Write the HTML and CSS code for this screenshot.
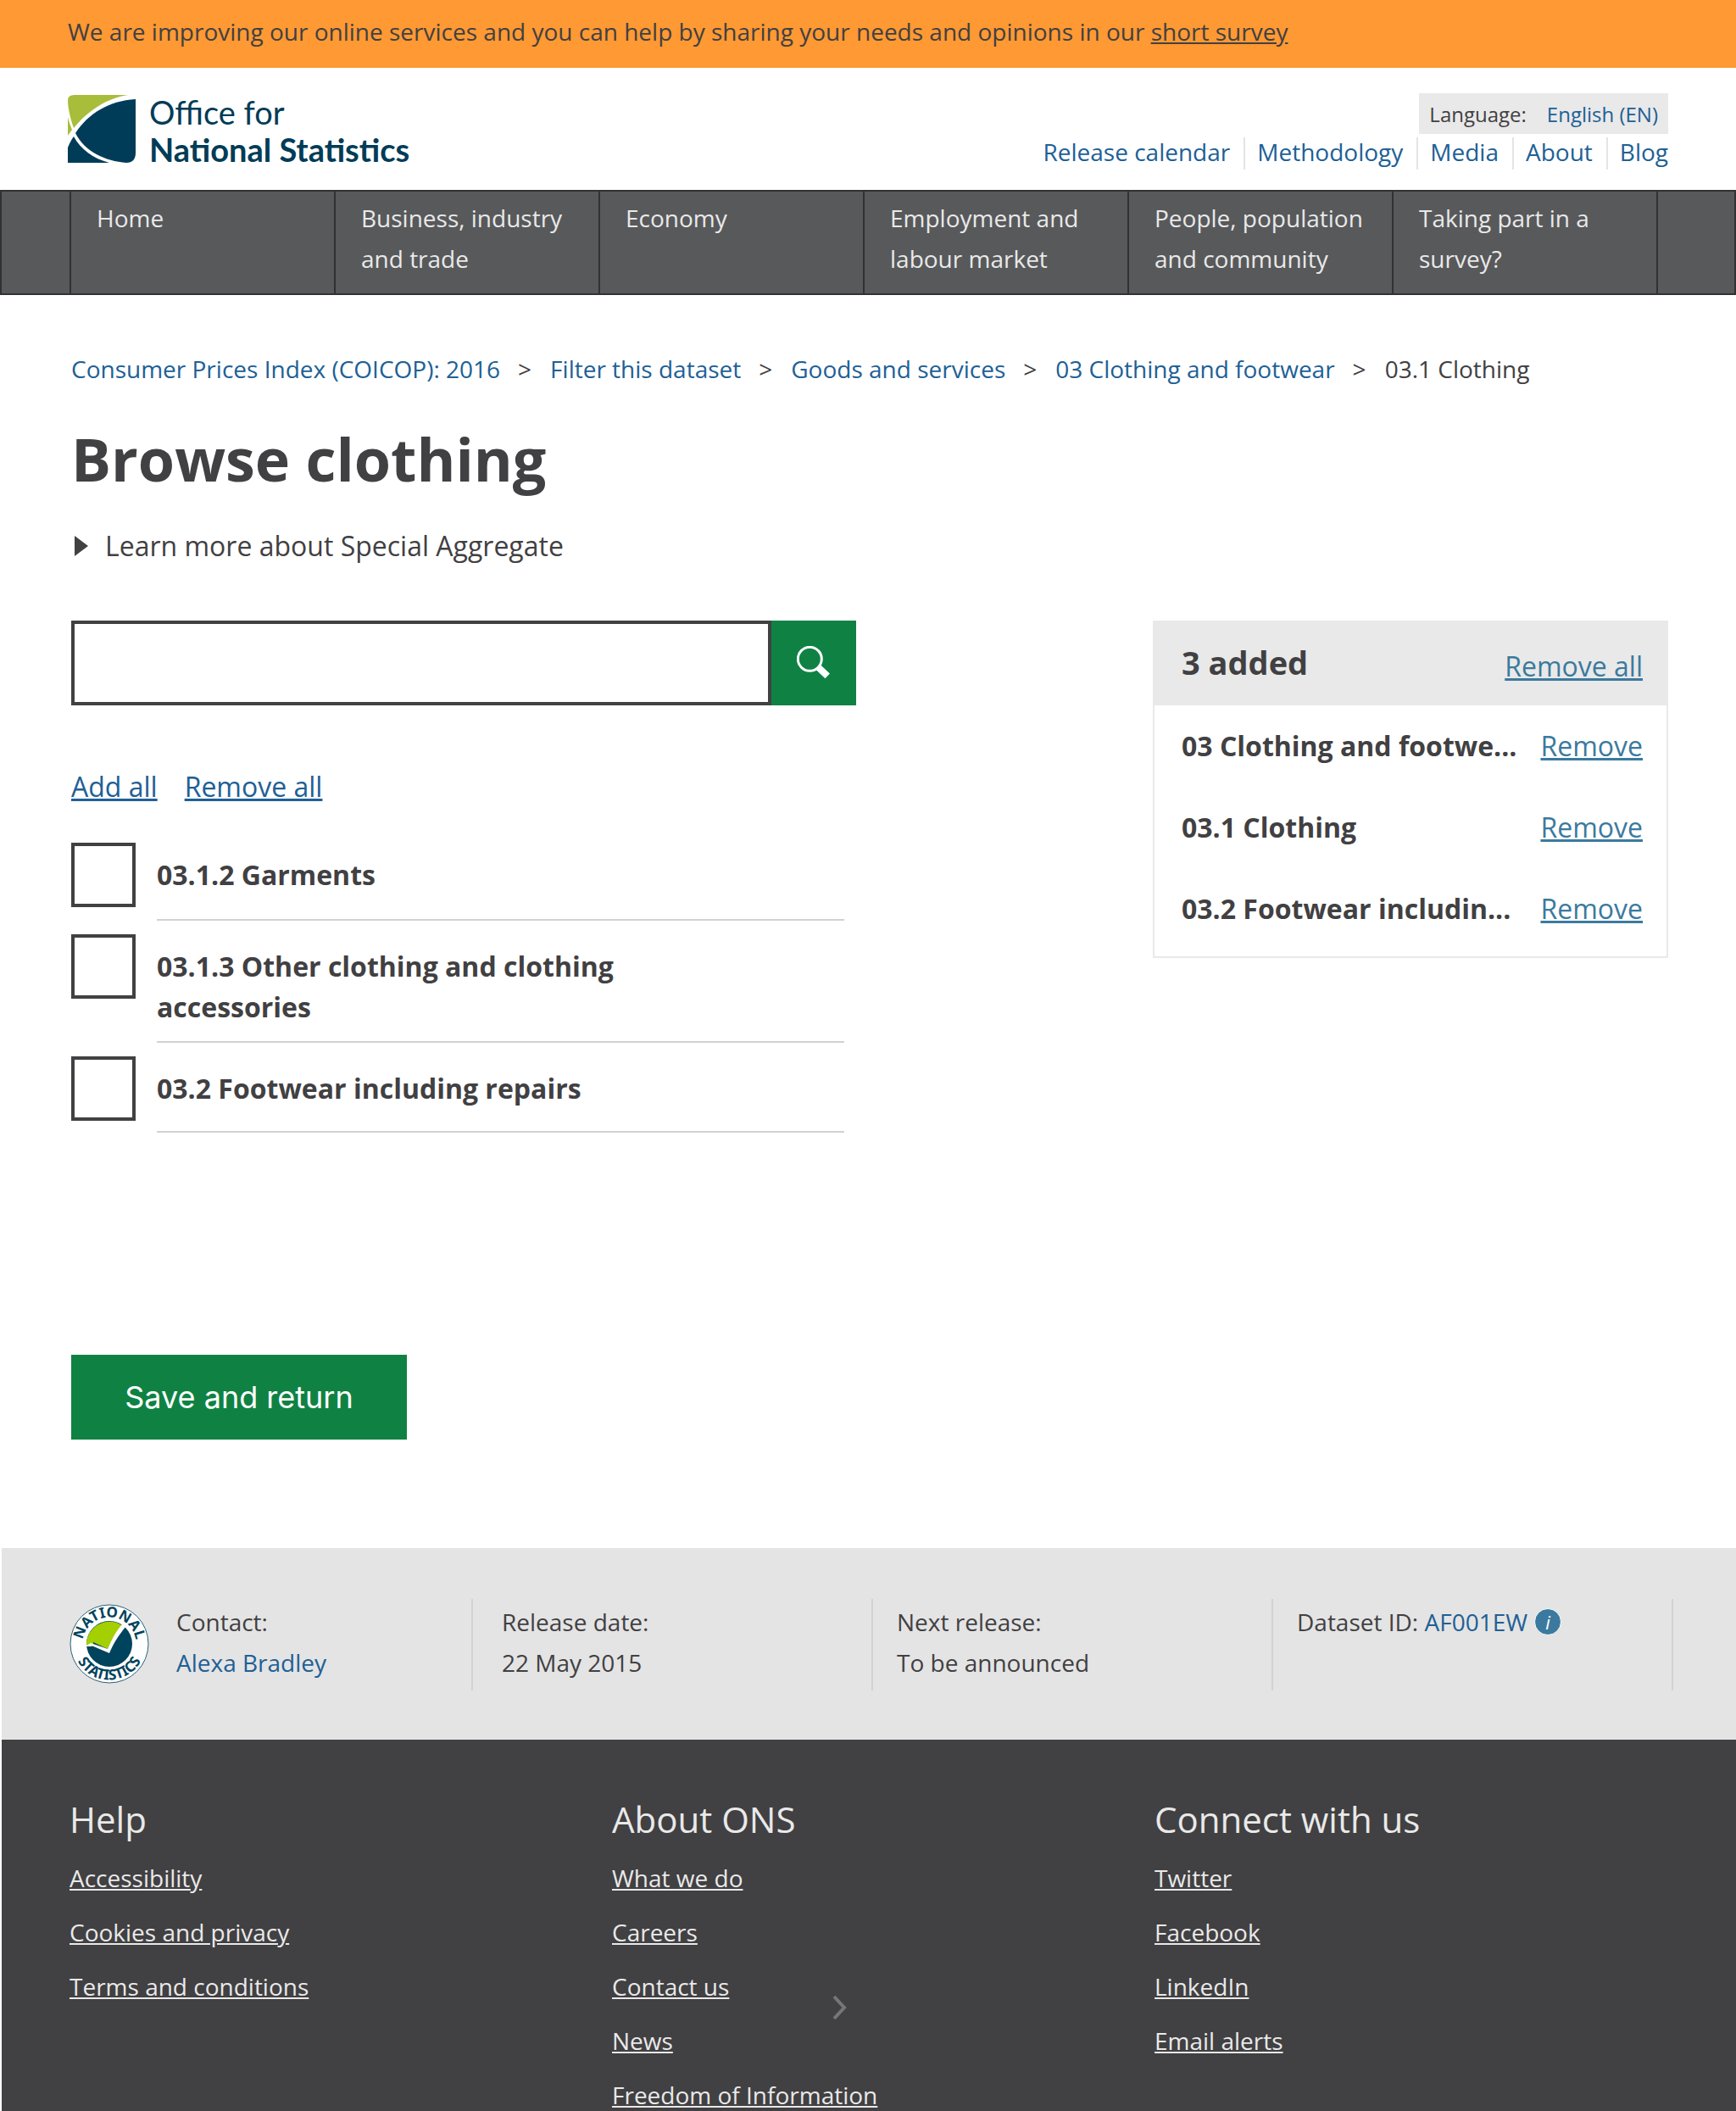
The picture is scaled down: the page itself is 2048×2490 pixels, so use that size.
FILE: index.html
```html
<!DOCTYPE html>
<html lang="en">
<head>
<meta charset="utf-8">
<title>Browse clothing - Office for National Statistics</title>
<link rel="stylesheet" href="styles.css">
</head>
<body>
<div class="banner">
  <p class="banner-text">We are improving our online services and you can help by sharing your needs and opinions in our <a href="#">short survey</a></p>
</div>

<header class="header">
  <a class="logo" href="#">
    <svg class="logo-mark" viewBox="0 0 80 80" aria-hidden="true">
      <path fill="#a8bd3a" d="M8 0H71C48 3 24 18 7 39C3 28 0 15 0 6Q0 0 8 0Z"/>
      <path fill="#a8bd3a" d="M0 26C1 31 3 36 5 41C3 44 1 46 0 48Z"/>
      <path fill="#003c57" d="M80 5V68Q80 80 69 80C44 78 20 67 9 45C24 22 48 7 80 5Z"/>
      <path fill="#003c57" d="M7 49C15 64 30 75 49 80H0V62C2 57 4 53 7 49Z"/>
    </svg>
    <span class="logo-text"><span>Office for</span><strong>National Statistics</strong></span>
  </a>
  <div class="header-right">
    <p class="language"><span>Language:</span><a href="#">English (EN)</a></p>
    <nav class="links" aria-label="Secondary">
      <a href="#">Release calendar</a><a href="#">Methodology</a><a href="#">Media</a><a href="#">About</a><a href="#">Blog</a>
    </nav>
  </div>
</header>

<nav class="nav" aria-label="Primary">
  <a href="#">Home</a>
  <a href="#">Business, industry and trade</a>
  <a href="#">Economy</a>
  <a href="#">Employment and labour market</a>
  <a href="#">People, population and community</a>
  <a href="#">Taking part in a survey?</a>
</nav>

<main class="main">
  <nav aria-label="Breadcrumb">
    <ol class="breadcrumb">
      <li><a href="#">Consumer Prices Index (COICOP): 2016</a></li>
      <li><a href="#">Filter this dataset</a></li>
      <li><a href="#">Goods and services</a></li>
      <li><a href="#">03 Clothing and footwear</a></li>
      <li>03.1 Clothing</li>
    </ol>
  </nav>
  <h1 class="title">Browse clothing</h1>
  <details class="learn">
    <summary><svg class="arrow" viewBox="0 0 16 24" aria-hidden="true"><path fill="#414042" d="M0 0L16 12L0 24Z"/></svg>Learn more about Special Aggregate</summary>
  </details>

  <div class="columns">
    <div class="browse">
      <form class="search" role="search">
        <input type="search" aria-label="Search">
        <button type="button" aria-label="Search">
          <svg viewBox="0 0 40 40" aria-hidden="true"><circle cx="15.3" cy="15.3" r="14" fill="none" stroke="#fff" stroke-width="3"/><path d="M24.5 24.3L36.2 35.3" stroke="#fff" stroke-width="8"/></svg>
        </button>
      </form>
      <p class="bulk"><a href="#">Add all</a><a href="#">Remove all</a></p>
      <ul class="options">
        <li><input type="checkbox" id="garments"><label for="garments"><span>03.1.2 Garments</span></label></li>
        <li><input type="checkbox" id="other"><label for="other"><span>03.1.3 Other clothing and clothing accessories</span></label></li>
        <li><input type="checkbox" id="footwear"><label for="footwear"><span>03.2 Footwear including repairs</span></label></li>
      </ul>
    </div>
    <aside class="added">
      <div class="added-head"><h2>3 added</h2><a href="#">Remove all</a></div>
      <ul class="added-list">
        <li><strong>03 Clothing and footwe...</strong><a href="#">Remove</a></li>
        <li><strong>03.1 Clothing</strong><a href="#">Remove</a></li>
        <li><strong>03.2 Footwear includin...</strong><a href="#">Remove</a></li>
      </ul>
    </aside>
  </div>
  <button class="save" type="button">Save and return</button>
</main>

<section class="meta" aria-label="Dataset details">
  <div class="meta-item meta-contact">
    <svg class="seal" viewBox="0 0 94 94" role="img" aria-label="National Statistics">
      <defs>
        <path id="seal-top" d="M15.5 47A31.5 31.5 0 0 1 78.500 47"/>
        <path id="seal-bottom" d="M4.500 47A42.500 42.500 0 0 0 89.500 47"/>
      </defs>
      <circle cx="47" cy="47" r="46" fill="#fff" stroke="#2a6079"/>
      <circle cx="47" cy="47" r="27" fill="#00435c"/>
      <path fill="#a4cf00" d="M20 49A27 27 0 0 1 63 26C55 32 50 42 45 53L28 45V50Z"/>
      <path fill="#fff" d="M20 49L25 46L45 53C50 41 55 32 62 24L66 27C58 37 52 46 47 58L26 49V50H20Z"/>
      <g class="seal-text">
        <text><textPath href="#seal-top" startOffset="50%">NATIONAL</textPath></text>
        <text><textPath href="#seal-bottom" startOffset="50%">STATISTICS</textPath></text>
      </g>
    </svg>
    <p>Contact:<br><a href="#">Alexa Bradley</a></p>
  </div>
  <div class="meta-item meta-release"><p>Release date:<br>22 May 2015</p></div>
  <div class="meta-item"><p>Next release:<br>To be announced</p></div>
  <div class="meta-item"><p>Dataset ID: <a href="#">AF001EW</a></p><button class="info" type="button" aria-label="About the dataset ID"><em>i</em></button></div>
</section>

<footer class="footer">
  <section>
    <h2>Help</h2>
    <ul>
      <li><a href="#">Accessibility</a></li>
      <li><a href="#">Cookies and privacy</a></li>
      <li><a href="#">Terms and conditions</a></li>
    </ul>
  </section>
  <section class="about">
    <h2>About ONS</h2>
    <ul>
      <li><a href="#">What we do</a></li>
      <li><a href="#">Careers</a></li>
      <li><a href="#">Contact us</a></li>
      <li><a href="#">News</a></li>
      <li><a href="#">Freedom of Information</a></li>
    </ul>
    <svg class="chevron" viewBox="0 0 18 30" aria-hidden="true"><path fill="none" stroke="#767577" stroke-width="4" d="M2 2L14 15L2 28"/></svg>
  </section>
  <section>
    <h2>Connect with us</h2>
    <ul>
      <li><a href="#">Twitter</a></li>
      <li><a href="#">Facebook</a></li>
      <li><a href="#">LinkedIn</a></li>
      <li><a href="#">Email alerts</a></li>
    </ul>
  </section>
</footer>
</body>
</html>
```
FILE: styles.css
```css
* { box-sizing: border-box; }

body {
  margin: 0;
  background: #fff;
  color: #414042;
  font: 28px/48px "Open Sans", "Noto Sans", sans-serif;
}

h1, h2, p, ul, ol { margin: 0; padding: 0; }
ul, ol { list-style: none; }
a { color: #206095; text-decoration: none; }
button { border: 0; padding: 0; color: #fff; cursor: pointer; }

.banner { background: #ff9933; padding: 13px 80px 19px; }
.banner a { color: inherit; text-decoration: underline; }

.header {
  display: flex;
  justify-content: space-between;
  align-items: flex-start;
  padding: 30px 80px 24px;
}
.logo { display: flex; gap: 16px; color: #003c57; }
.logo-mark { width: 80px; height: 80px; margin-top: 2px; }
.logo-text { display: flex; flex-direction: column; font: 38px/44px Lato, "Open Sans", sans-serif; }
.logo-text strong { font-weight: 700; }
.header-right { display: flex; flex-direction: column; align-items: flex-end; gap: 4px; }
.language { display: flex; gap: 24px; padding: 2px 12px 0; background: #e9e9e9; font-size: 24px; line-height: 46px; }
.links { display: flex; line-height: 34px; }
.links a { padding: 0 16px 4px 14px; border-right: 2px solid #e4e4e4; }
.links a:last-child { padding-right: 0; border: 0; }

.nav {
  display: grid;
  grid-template-columns: repeat(6, 1fr) 92px;
  padding-left: 80px;
  background: #58595b;
  border: 2px solid #323132;
}
.nav a { padding: 7px 28px 17px 30px; border-left: 2px solid #323132; color: #e9e9e9; }
.nav::after { content: ""; border-left: 2px solid #323132; }

.main { padding: 63px 80px 128px 84px; }
.breadcrumb { display: flex; }
.breadcrumb li + li::before { content: ">"; margin: 0 22px 0 21px; color: #414042; }
.title { margin: 34px 0 31px; font-size: 70px; line-height: 96px; }
.learn, .bulk, .options, .added { font-size: 32px; }
.learn summary { display: flex; align-items: center; gap: 20px; padding-left: 4px; list-style: none; }
.arrow { width: 16px; height: 24px; }

.columns { display: flex; justify-content: space-between; align-items: flex-start; margin-top: 64px; }
.browse { width: 926px; }
.search { display: flex; height: 100px; }
.search input {
  flex: 1;
  min-width: 0;
  border: 4px solid #414042;
  border-radius: 0;
  padding: 0 20px;
  font: inherit;
  appearance: none;
}
.search button { width: 100px; background: #0f8243; }
.search svg { display: block; width: 40px; height: 40px; margin: auto; }
.bulk { display: flex; gap: 32px; margin-top: 72px; }
.bulk a, .added a { text-decoration: underline; }

.options { display: grid; gap: 16px; margin: 42px 14px 0 0; font-weight: 700; }
.options li { display: flex; gap: 25px; }
.options input {
  appearance: none;
  flex: none;
  width: 76px;
  height: 76px;
  margin: 0;
  border: 4px solid #414042;
}
.options label { flex: 1; min-height: 92px; padding: 14px 0 16px; border-bottom: 2px solid #d0d2d3; }
.options li:last-child label { min-height: 90px; }
.options span { display: block; max-width: 640px; }

.added { width: 608px; border: 2px solid #e9e9e9; }
.added a { color: #3b7a9e; }
.added-head { display: flex; justify-content: space-between; align-items: center; height: 98px; padding: 0 28px 0 32px; background: #e9e9e9; }
.added-head h2 { padding-bottom: 4px; font-size: 38px; }
.added-head a { padding-top: 6px; }
.added-list { padding-bottom: 8px; }
.added-list li { display: flex; align-items: center; justify-content: space-between; gap: 24px; height: 96px; padding: 0 28px 0 32px; }

.save { margin-top: 262px; width: 396px; height: 100px; background: #0f8243; font: 36px/48px Inter, Roboto, sans-serif; }

.meta {
  display: grid;
  grid-template-columns: 1fr 472px 472px 472px;
  margin-left: 2px;
  padding: 60px 74px 58px 80px;
  background: #e4e4e4;
}
.meta-item { display: flex; align-items: flex-start; gap: 8px; height: 108px; padding: 3px 28px; border-right: 2px solid #d0d2d3; }
.meta-contact { gap: 32px; padding-left: 0; }
.meta-release { padding-left: 34px; }
.seal { width: 94px; height: 94px; margin-top: 3px; }
.seal-text { fill: #00435c; font: 700 17px "Noto Sans", sans-serif; text-anchor: middle; }
.info {
  width: 32px;
  height: 32px;
  margin-top: 8px;
  border: 1px solid #fff;
  border-radius: 50%;
  background: #3b7a9e;
  font: 22px/28px "Open Sans", sans-serif;
}

.footer {
  display: grid;
  grid-template-columns: repeat(3, 1fr);
  margin-left: 2px;
  padding: 66px 46px 0 80px;
  background: #414042;
  color: #e9e9e9;
}
.footer h2 { font-size: 42px; font-weight: 400; line-height: 56px; margin-bottom: 9px; }
.footer li { height: 64px; padding-top: 8px; }
.footer a { color: inherit; text-decoration: underline; }
.about { position: relative; }
.chevron { position: absolute; left: 260px; top: 235px; width: 18px; height: 30px; }
```
